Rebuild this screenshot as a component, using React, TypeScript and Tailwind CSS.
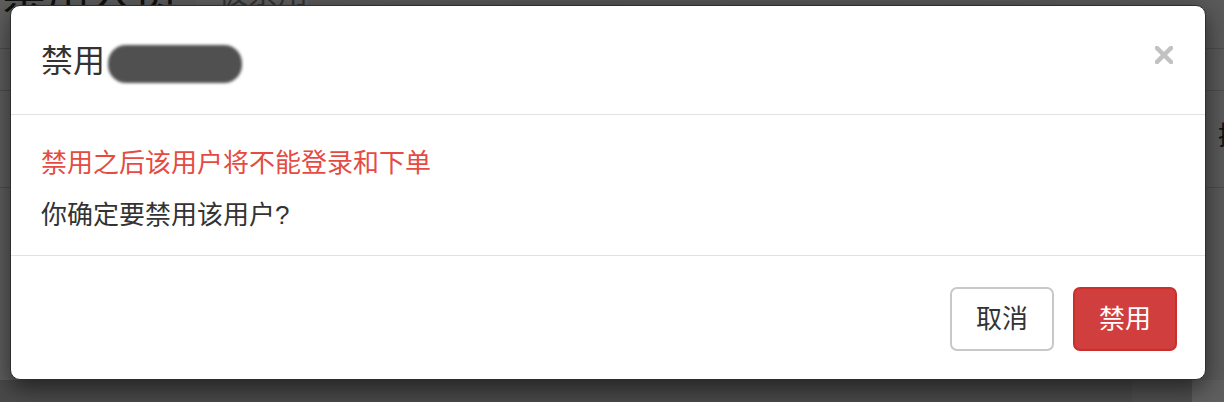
import React from "react";

const font = { fontFamily: '"Liberation Sans", "Noto Sans CJK SC", sans-serif' };

export default function App() {
  return (
    <div
      className="relative w-[1224px] h-[402px] overflow-hidden bg-[#585858]"
      style={font}
    >
      {/* dimmed page behind */}
      <div className="flex flex-col w-full h-full bg-gradient-to-r from-[#5e5e5e] via-[#555555] to-[#5a5a5a]">
        <div className="flex items-end h-[16px] overflow-hidden">
          <div className="mt-[-28px] ml-[2px] text-[44px] leading-[44px] text-[#111] whitespace-nowrap">
            禁用人员
          </div>
          <div className="ml-[18px] w-[112px] h-[16px] bg-[#5f5f5f] overflow-hidden">
            <div className="mt-[-22px] ml-[22px] text-[30px] leading-[30px] text-[#333]">被禁用</div>
          </div>
        </div>
        <div className="h-[32px]" />
        <div className="h-px bg-[#4c4c4c]" />
        <div className="h-[41px]" />
        <div className="h-px bg-[#4e4e4e]" />
        <div className="flex justify-end h-[96px]">
          <div className="mt-[32px] mr-[-20px] text-[26px] leading-[26px] text-[#111]">操</div>
        </div>
        <div className="h-px bg-[#4c4c4c]" />
        <div className="flex-1" />
        <div className="flex h-[22px]">
          <div className="flex-1 bg-[#4a4a4a]" />
          <div className="w-[60px] bg-[#4e4e4e]" />
          <div className="w-[32px] bg-[#5f5f5f]" />
        </div>
      </div>

      {/* modal */}
      <div className="absolute left-[10px] top-[5px] w-[1196px] h-[375px] rounded-[10px] bg-white border border-[#2e2e2e] shadow-[0_8px_24px_rgba(0,0,0,0.55)] flex flex-col">
        <div className="flex items-center justify-between pl-[30px] pr-[32px] pt-[33px] pb-[31px] border-b border-[#e2e2e2]">
          <div className="flex items-center text-[32px] leading-[44px] text-[#333]">
            <span>禁用</span>
            <span className="inline-block ml-[3px] mt-[6px] w-[134px] h-[38px] rounded-[18px] bg-[#505050] blur-[1.5px]" />
          </div>
          <svg width="18" height="18" viewBox="0 0 18 18" className="mt-[-12px]">
            <path d="M2 2 L16 16 M16 2 L2 16" stroke="#c2c2c2" strokeWidth="4.5" strokeLinecap="square" />
          </svg>
        </div>
        <div className="flex flex-col pl-[30px] pt-[28px] pb-[20px] border-b border-[#e2e2e2]">
          <div className="text-[26px] leading-[40px] text-[#e54b42]">禁用之后该用户将不能登录和下单</div>
          <div className="mt-[12px] text-[26px] leading-[40px] text-[#333]">你确定要禁用该用户?</div>
        </div>
        <div className="flex justify-end gap-[19px] pr-[28px] pt-[31px]">
          <button className="w-[104px] h-[64px] rounded-[7px] border-2 border-[#c8c8c8] bg-white text-[26px] text-[#333]">
            取消
          </button>
          <button className="w-[104px] h-[64px] rounded-[7px] border-2 border-[#c9302c] bg-[#d13e3e] text-[26px] text-white">
            禁用
          </button>
        </div>
      </div>
    </div>
  );
}
